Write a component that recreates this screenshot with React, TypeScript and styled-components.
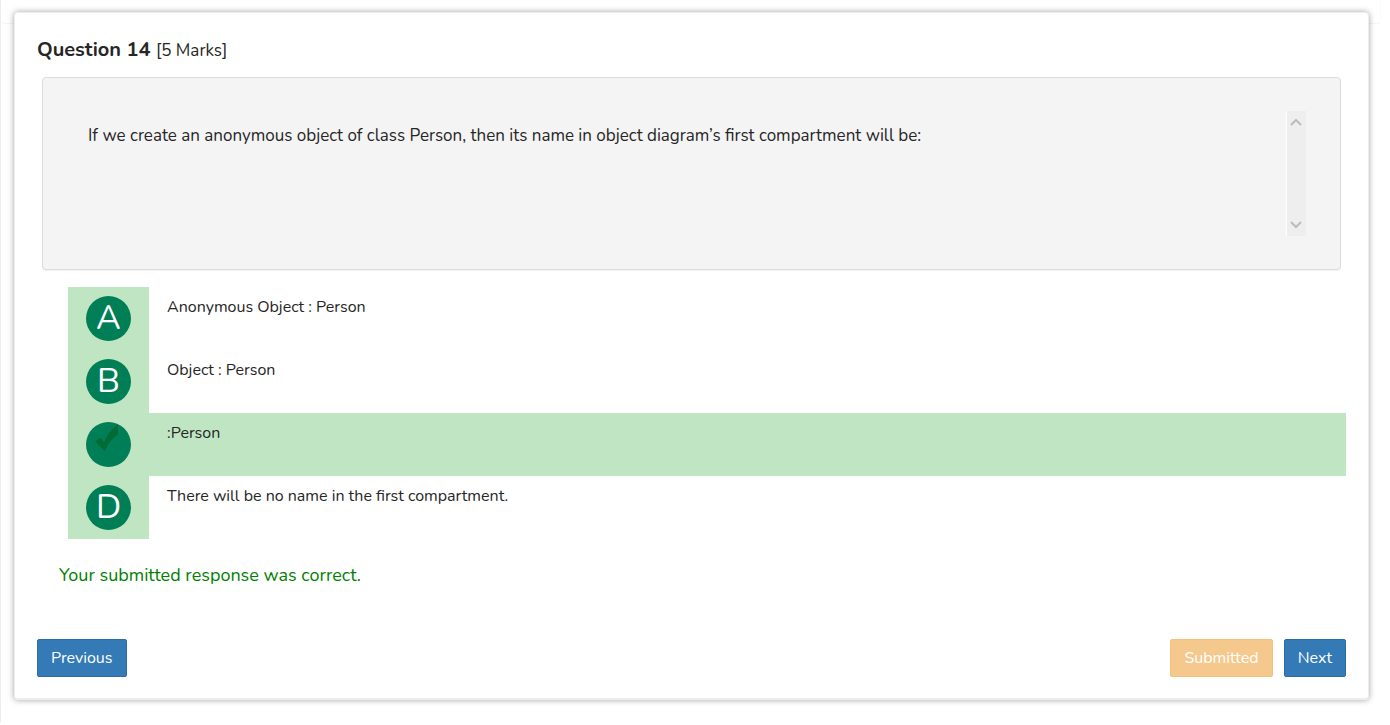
import React from "react";
import styled, { createGlobalStyle } from "styled-components";

const GlobalStyle = createGlobalStyle`
  * { box-sizing: border-box; }
  body {
    margin: 0;
    background: #fff;
    color: #262626;
    font-family: Nunito, Lato, "Open Sans", sans-serif;
    font-size: 16px;
    line-height: 24px;
  }
`;

const Page = styled.div`
  border-left: 1px solid #f0ecec;
  padding-bottom: 22px;
`;

const TopCard = styled.div`
  height: 24px;
  margin-right: 9px;
  border-bottom: 1px solid #f5f5f5;
  border-right: 1px solid #fafafa;
  border-radius: 0 0 4px 4px;
`;

const Panel = styled.main`
  position: relative;
  margin: -12px 21px 0 13px;
  padding: 24px 22px 21px;
  background: #fff;
  border: 1px solid #ededed;
  border-bottom-width: 2px;
  border-radius: 4px;
  box-shadow: 0 0 6px rgba(0, 0, 0, 0.36);
`;

const Heading = styled.h1`
  margin: 0;
  font-size: 20px;
  line-height: 26px;
  font-weight: 700;
`;

const Marks = styled.span`
  font-size: 17px;
  font-weight: 400;
`;

const QuestionBox = styled.section`
  display: flex;
  align-items: flex-start;
  margin: 13px 5px 0;
  padding: 33px 34px 33px 45px;
  background: #f4f4f4;
  border: 1px solid #dcdcdc;
  border-radius: 4px;
  box-shadow: 0 1px 1px rgba(0, 0, 0, 0.05);
`;

const QuestionText = styled.p`
  flex: 1;
  margin: 0;
  padding-top: 13px;
  font-size: 17px;
`;

const Rail = styled.div`
  display: flex;
  flex-direction: column;
  justify-content: space-between;
  align-items: center;
  width: 20px;
  height: 125px;
  padding: 6px 2px 6px 0;
  background: #eee;
  border-left: 1px solid #fff;
`;

const Options = styled.ol`
  list-style: none;
  margin: 17px 0 0 31px;
  padding: 0;
`;

const Option = styled.li<{ $correct?: boolean }>`
  display: flex;
  background: ${(p) => (p.$correct ? "#c0e5c3" : "transparent")};
`;

const Tile = styled.div`
  padding: 9px 18px;
  background: #c0e5c3;
`;

const Badge = styled.span`
  display: flex;
  justify-content: center;
  width: 45px;
  height: 45px;
  border-radius: 50%;
  background: #007f56;
  color: #fff;
  font-size: 34px;
  line-height: 45px;
`;

const OptionText = styled.span`
  padding: 8px 18px;
`;

const Feedback = styled.p`
  margin: 24px 0 0 22px;
  color: #008000;
  font-size: 18px;
`;

const Actions = styled.footer`
  display: flex;
  gap: 11px;
  margin-top: 52px;
`;

const Button = styled.button<{ $tone?: "amber" }>`
  height: 38px;
  padding: 0 13px;
  border: 1px solid ${(p) => (p.$tone ? "#f4c27c" : "#2e6da4")};
  border-radius: 2px;
  background: ${(p) => (p.$tone ? "#f5c98d" : "#337ab7")};
  color: #fff;
  font: inherit;

  &:first-child {
    margin-right: auto;
  }
`;

const Chevron = ({ d }: { d: string }) => (
  <svg width="12" height="10" viewBox="0 0 12 10" aria-hidden="true">
    <path d={d} fill="none" stroke="#bcbcbc" strokeWidth="2" />
  </svg>
);

const Check = () => (
  <svg width="45" height="45" viewBox="0 0 45 45" role="img" aria-label="Correct">
    <path
      d="M9 19.5L14.5 15.5L18 20.5C21 13.5 25 6.5 32 2.5V12.5C26.5 16 22 21.5 18.8 29Z"
      fill="#006b37"
    />
  </svg>
);

const options = [
  { letter: "A", text: "Anonymous Object : Person" },
  { letter: "B", text: "Object : Person" },
  { letter: "C", text: ":Person", correct: true },
  { letter: "D", text: "There will be no name in the first compartment." },
];

export default function App() {
  return (
    <>
      <GlobalStyle />
      <Page>
        <TopCard />
        <Panel>
          <Heading>
            Question 14 <Marks>[5 Marks]</Marks>
          </Heading>
          <QuestionBox>
            <QuestionText>
              If we create an anonymous object of class Person, then its name in
              object diagram’s first compartment will be:
            </QuestionText>
            <Rail>
              <Chevron d="M1 8L6 3L11 8" />
              <Chevron d="M1 2L6 7L11 2" />
            </Rail>
          </QuestionBox>
          <Options>
            {options.map((o) => (
              <Option key={o.letter} $correct={o.correct}>
                <Tile>
                  <Badge>{o.correct ? <Check /> : o.letter}</Badge>
                </Tile>
                <OptionText>{o.text}</OptionText>
              </Option>
            ))}
          </Options>
          <Feedback>Your submitted response was correct.</Feedback>
          <Actions>
            <Button type="button">Previous</Button>
            <Button type="button" $tone="amber" disabled>
              Submitted
            </Button>
            <Button type="button">Next</Button>
          </Actions>
        </Panel>
      </Page>
    </>
  );
}
